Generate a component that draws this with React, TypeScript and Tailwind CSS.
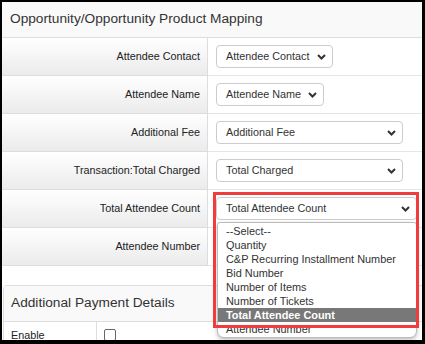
import React from "react";

const Chevron = () => (
  <svg width="9" height="6" viewBox="0 0 9 6" className="shrink-0">
    <path d="M1 1L4.5 4.5L8 1" fill="none" stroke="#333" strokeWidth="2" />
  </svg>
);

const Sel = ({ text, w }: { text: string; w: string }) => (
  <div
    className={`${w} h-[23px] border border-[#ccc] rounded-[4px] bg-white flex items-center justify-between pl-[9px] pr-[6px] text-[10.8px] text-[#333]`}>
    <span>{text}</span>
    <Chevron />
  </div>
);

const options = [
  "--Select--",
  "Quantity",
  "C&P Recurring Installment Number",
  "Bid Number",
  "Number of Items",
  "Number of Tickets",
  "Total Attendee Count",
  "Attendee Number",
];

const rows: { label: string; sel?: string; w?: string; open?: boolean }[] = [
  { label: "Attendee Contact", sel: "Attendee Contact", w: "w-[117px]" },
  { label: "Attendee Name", sel: "Attendee Name", w: "w-[108px]" },
  { label: "Additional Fee", sel: "Additional Fee", w: "w-[187px]" },
  { label: "Transaction:Total Charged", sel: "Total Charged", w: "w-[187px]" },
  { label: "Total Attendee Count", sel: "Total Attendee Count", w: "w-[201px]", open: true },
  { label: "Attendee Number" },
];

export default function App() {
  return (
    <div className="w-[425px] h-[344px] bg-black pt-[2px] pl-[2px] pr-[3px] pb-[4px] font-['Liberation_Sans',Arial,sans-serif]">
      <div className="relative w-full h-full bg-white overflow-hidden">
        {/* mapping panel */}
        <div className="h-[36px] bg-[#f9f9f9] border-b border-[#ddd] flex items-center pl-[8px] text-[13.7px] text-[#333]">
          Opportunity/Opportunity Product Mapping
        </div>
        {rows.map((r) => (
          <div key={r.label} className="flex h-[38px]">
            <div className="w-[206px] shrink-0 bg-gradient-to-b from-white to-[#ebebeb] border-r border-b border-[#ddd] flex items-center justify-end pr-[7px] text-[10.8px] text-[#222]">
              {r.label}
            </div>
            <div className="relative flex-1 border-b border-[#e5e5e5] flex items-center pl-[8px]">
              {r.sel && <Sel text={r.sel} w={r.w!} />}
              {r.open && (
                <>
                  <div className="absolute left-[9px] top-[32px] w-[200px] h-[116px] bg-white border border-[#bbb] rounded-t-[3px] rounded-b-[7px] shadow-[0_2px_4px_rgba(0,0,0,0.25)] py-[1px] z-10">
                    {options.map((o) => (
                      <div
                        key={o}
                        className={`h-[14px] leading-[14px] pl-[8px] text-[10.9px] ${
                          o === "Total Attendee Count"
                            ? "bg-[#787878] text-white font-bold"
                            : "text-[#333]"
                        }`}>
                        {o}
                      </div>
                    ))}
                  </div>
                  <div className="absolute left-[5px] top-[2px] w-[206px] h-[136px] border-[3px] border-[#f03c3c] z-20" />
                </>
              )}
            </div>
          </div>
        ))}

        {/* payment panel */}
        <div className="mt-[19px] ml-[1px] border-l border-t border-[#ddd] rounded-tl-[4px]">
          <div className="h-[36px] bg-[#f9f9f9] border-b border-[#ddd] flex items-center pl-[7px] text-[13.7px] text-[#333]">
            Additional Payment Details
          </div>
          <div className="flex h-[30px]">
            <div className="w-[93px] border-r border-[#ddd] pl-[7px] pt-[5px] text-[10.8px] text-[#222]">
              Enable
            </div>
            <div className="pl-[7px] pt-[7px]">
              <div className="w-[12px] h-[12px] border border-[#666] rounded-[2px] bg-white" />
            </div>
          </div>
        </div>
      </div>
    </div>
  );
}
